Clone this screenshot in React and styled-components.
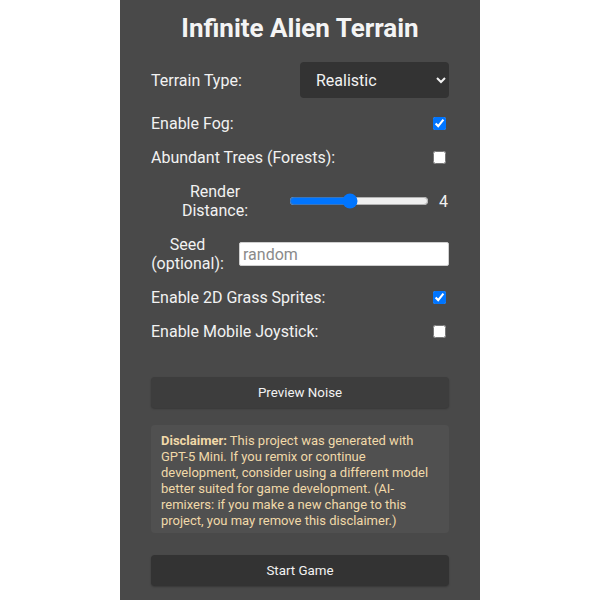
import React, { useState } from "react";
import styled, { createGlobalStyle } from "styled-components";

const GlobalStyle = createGlobalStyle`
  html, body {
    margin: 0;
    background: #ffffff;
  }
  body {
    font-family: Roboto, "Liberation Sans", Arial, sans-serif;
  }
`;

const Panel = styled.div`
  width: 360px;
  min-height: 600px;
  margin: 0 auto;
  box-sizing: border-box;
  padding: 12px 31px 20px 31px;
  background: #494949;
  color: #f2f2f2;
`;

const Title = styled.h1`
  margin: 0;
  font-size: 26px;
  line-height: 32px;
  font-weight: 700;
  text-align: center;
  color: #f4f4f4;
`;

const Form = styled.div`
  display: flex;
  flex-direction: column;
  gap: 15px;
  margin-top: 18px;
`;

const Row = styled.label`
  display: flex;
  align-items: center;
  justify-content: space-between;
  font-size: 16px;
  line-height: 19px;
  margin-bottom: ${(p) => p.$extra || 0}px;
`;

const StackedLabel = styled.span`
  width: ${(p) => p.$width}px;
  text-align: center;
`;

const Select = styled.select`
  width: 149px;
  height: 36px;
  box-sizing: border-box;
  padding: 0 10px 0 12px;
  border: none;
  border-radius: 4px;
  background: #333333;
  color: #f2f2f2;
  font-family: inherit;
  font-size: 16px;
`;

const Check = styled.input.attrs({ type: "checkbox" })`
  margin: 0 3px 0 0;
  width: 13px;
  height: 13px;
`;

const Range = styled.input.attrs({ type: "range" })`
  width: 140px;
  margin: 0 0 0 8px;
`;

const Value = styled.span`
  width: 18px;
  text-align: right;
  padding-right: 1px;
`;

const TextInput = styled.input`
  width: 210px;
  height: 24px;
  box-sizing: border-box;
  padding: 0 3px;
  border: 1px solid #cfcfcf;
  border-radius: 2px;
  background: #ffffff;
  font-family: inherit;
  font-size: 16px;
  color: #222;
  &::placeholder {
    color: #8a8a8a;
  }
`;

const Button = styled.button`
  display: block;
  width: 100%;
  height: 31px;
  margin-top: ${(p) => p.$top}px;
  border: none;
  border-radius: 4px;
  background: ${(p) => p.$bg};
  color: #f2f2f2;
  font-family: inherit;
  font-size: 13.333px;
  box-shadow: 0 1px 2px rgba(0, 0, 0, 0.25);
  cursor: pointer;
`;

const Disclaimer = styled.div`
  margin-top: 17px;
  padding: 8px 10px 4px 10px;
  border-radius: 4px;
  background: #505050;
  color: #f1d9a9;
  font-size: 13px;
  line-height: 16px;
  strong {
    font-weight: 700;
  }
`;

export default function App() {
  const [fog, setFog] = useState(true);
  const [trees, setTrees] = useState(false);
  const [grass, setGrass] = useState(true);
  const [joystick, setJoystick] = useState(false);
  const [distance, setDistance] = useState(4);

  return (
    <>
      <GlobalStyle />
      <Panel>
        <Title>Infinite Alien Terrain</Title>
        <Form>
          <Row $extra={1}>
            <span>Terrain Type:</span>
            <Select defaultValue="realistic">
              <option value="realistic">Realistic</option>
              <option value="alien">Alien</option>
            </Select>
          </Row>
          <Row>
            <span>Enable Fog:</span>
            <Check checked={fog} onChange={(e) => setFog(e.target.checked)} />
          </Row>
          <Row>
            <span>Abundant Trees (Forests):</span>
            <Check checked={trees} onChange={(e) => setTrees(e.target.checked)} />
          </Row>
          <Row>
            <StackedLabel $width={128}>
              Render
              <br />
              Distance:
            </StackedLabel>
            <Range
              min={1}
              max={8}
              value={distance}
              onChange={(e) => setDistance(Number(e.target.value))}
            />
            <Value>{distance}</Value>
          </Row>
          <Row>
            <StackedLabel $width={73}>
              Seed
              <br />
              (optional):
            </StackedLabel>
            <TextInput placeholder="random" />
          </Row>
          <Row>
            <span>Enable 2D Grass Sprites:</span>
            <Check checked={grass} onChange={(e) => setGrass(e.target.checked)} />
          </Row>
          <Row>
            <span>Enable Mobile Joystick:</span>
            <Check
              checked={joystick}
              onChange={(e) => setJoystick(e.target.checked)}
            />
          </Row>
        </Form>
        <Button $top={36} $bg="#3d3d3d">
          Preview Noise
        </Button>
        <Disclaimer>
          <strong>Disclaimer:</strong> This project was generated with GPT-5
          Mini. If you remix or continue development, consider using a
          different model better suited for game development. (AI-remixers: if
          you make a new change to this project, you may remove this
          disclaimer.)
        </Disclaimer>
        <Button $top={22} $bg="#333333">
          Start Game
        </Button>
      </Panel>
    </>
  );
}
